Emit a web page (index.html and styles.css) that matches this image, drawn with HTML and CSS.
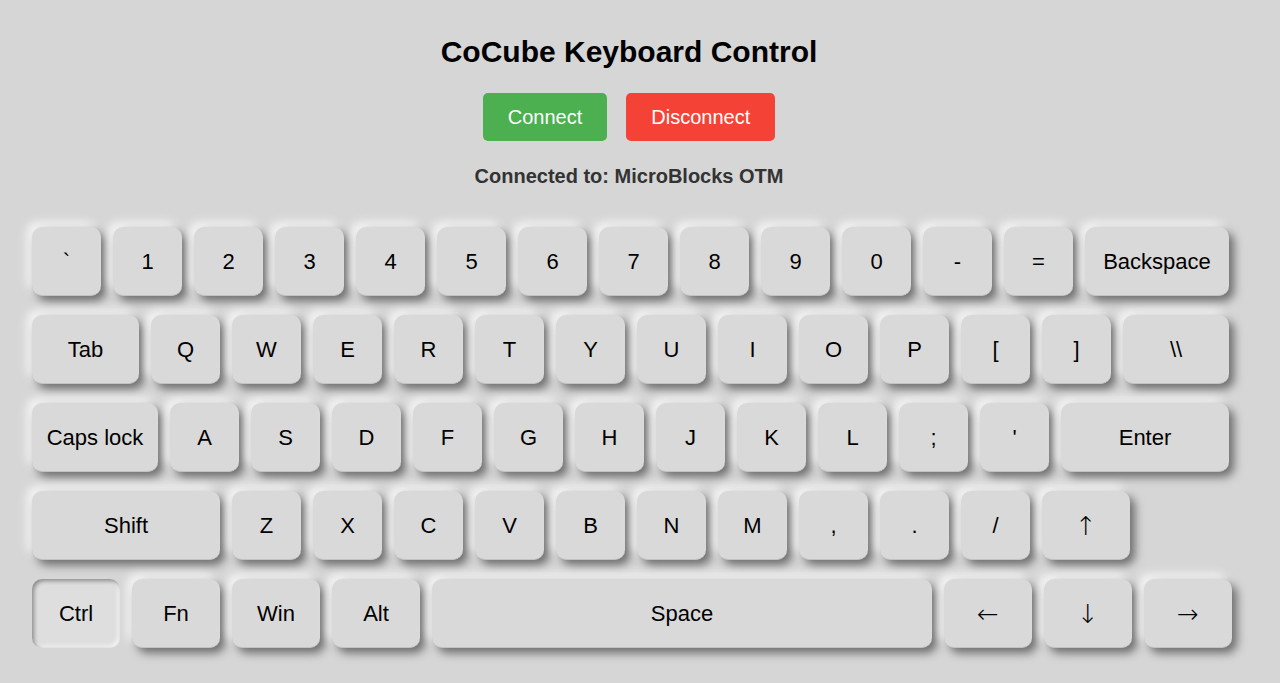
FILE: index.html
```html
<!DOCTYPE html>
<html lang="en">
<head>
<meta charset="utf-8">
<title>CoCube Keyboard Control</title>
<link rel="stylesheet" href="styles.css">
</head>
<body>
<div class="page">
  <h1 class="title">CoCube Keyboard Control</h1>
  <div class="actions">
    <button class="btn btn-connect">Connect</button>
    <button class="btn btn-disconnect">Disconnect</button>
  </div>
  <p class="status">Connected to: MicroBlocks OTM</p>
</div>
<div class="keyboard">
  <div class="row">
    <div class="key">`</div><div class="key">1</div><div class="key">2</div><div class="key">3</div><div class="key">4</div><div class="key">5</div><div class="key">6</div><div class="key">7</div><div class="key">8</div><div class="key">9</div><div class="key">0</div><div class="key">-</div><div class="key">=</div><div class="key w-backspace">Backspace</div>
  </div>
  <div class="row">
    <div class="key w-tab">Tab</div><div class="key">Q</div><div class="key">W</div><div class="key">E</div><div class="key">R</div><div class="key">T</div><div class="key">Y</div><div class="key">U</div><div class="key">I</div><div class="key">O</div><div class="key">P</div><div class="key">[</div><div class="key">]</div><div class="key w-backslash">\\</div>
  </div>
  <div class="row">
    <div class="key w-caps">Caps lock</div><div class="key">A</div><div class="key">S</div><div class="key">D</div><div class="key">F</div><div class="key">G</div><div class="key">H</div><div class="key">J</div><div class="key">K</div><div class="key">L</div><div class="key">;</div><div class="key">'</div><div class="key w-enter">Enter</div>
  </div>
  <div class="row">
    <div class="key w-shift">Shift</div><div class="key">Z</div><div class="key">X</div><div class="key">C</div><div class="key">V</div><div class="key">B</div><div class="key">N</div><div class="key">M</div><div class="key">,</div><div class="key">.</div><div class="key">/</div><div class="key w-mod arrow">↑</div>
  </div>
  <div class="row">
    <div class="key w-mod pressed">Ctrl</div><div class="key w-mod">Fn</div><div class="key w-mod">Win</div><div class="key w-mod">Alt</div><div class="key w-space">Space</div><div class="key w-mod arrow">←</div><div class="key w-mod arrow">↓</div><div class="key w-mod arrow">→</div>
  </div>
</div>
</body>
</html>
```

FILE: styles.css
```css
html, body {
  margin: 0;
  padding: 0;
  background: #d6d6d6;
  font-family: "Liberation Sans", Arial, sans-serif;
}

.page {
  width: 1258px;
  padding-top: 35px;
  text-align: center;
}

.title {
  margin: 0;
  font-size: 30px;
  line-height: 34px;
  font-weight: bold;
  color: #000;
}

.actions {
  margin-top: 24px;
  display: flex;
  justify-content: center;
  gap: 19px;
}

.btn {
  font-family: "Liberation Sans", Arial, sans-serif;
  font-size: 20px;
  line-height: 24px;
  padding: 12px 25px;
  border: none;
  border-radius: 5px;
  color: #fff;
}

.btn-connect { background: #4caf50; }
.btn-disconnect { background: #f44336; }

.status {
  margin: 24px 0 0;
  font-size: 20px;
  line-height: 23px;
  font-weight: bold;
  color: #333;
}

.keyboard {
  margin-top: 39px;
  padding: 0 0 40px 32px;
  display: flex;
  flex-direction: column;
  gap: 19px;
}

.row {
  display: flex;
  gap: 12px;
}

.key {
  flex: none;
  width: 69px;
  height: 69px;
  box-sizing: border-box;
  display: flex;
  align-items: center;
  justify-content: center;
  padding-top: 1px;
  background: #d9d9d9;
  border-radius: 10px;
  font-size: 22px;
  color: #000;
  box-shadow: 5px 5px 10px #6c6c6c, -5px -5px 10px #f6f6f6;
  border-bottom: 1px solid #c2c2c2;
}

.key.arrow {
  font-family: "DejaVu Sans", sans-serif;
  font-size: 26px;
  font-weight: 200;
  color: #000;
}

.w-backspace { width: 144px; }
.w-tab { width: 107px; }
.w-backslash { width: 106px; }
.w-caps { width: 126px; }
.w-enter { width: 168px; }
.w-shift { width: 188px; }
.w-mod { width: 88px; }
.w-space { width: 500px; }

.key.pressed {
  background: #dedede;
  border-bottom: none;
  box-shadow: inset 2px 2px 4px #8a8a8a, inset -2px -2px 4px #f8f8f8;
}
```
